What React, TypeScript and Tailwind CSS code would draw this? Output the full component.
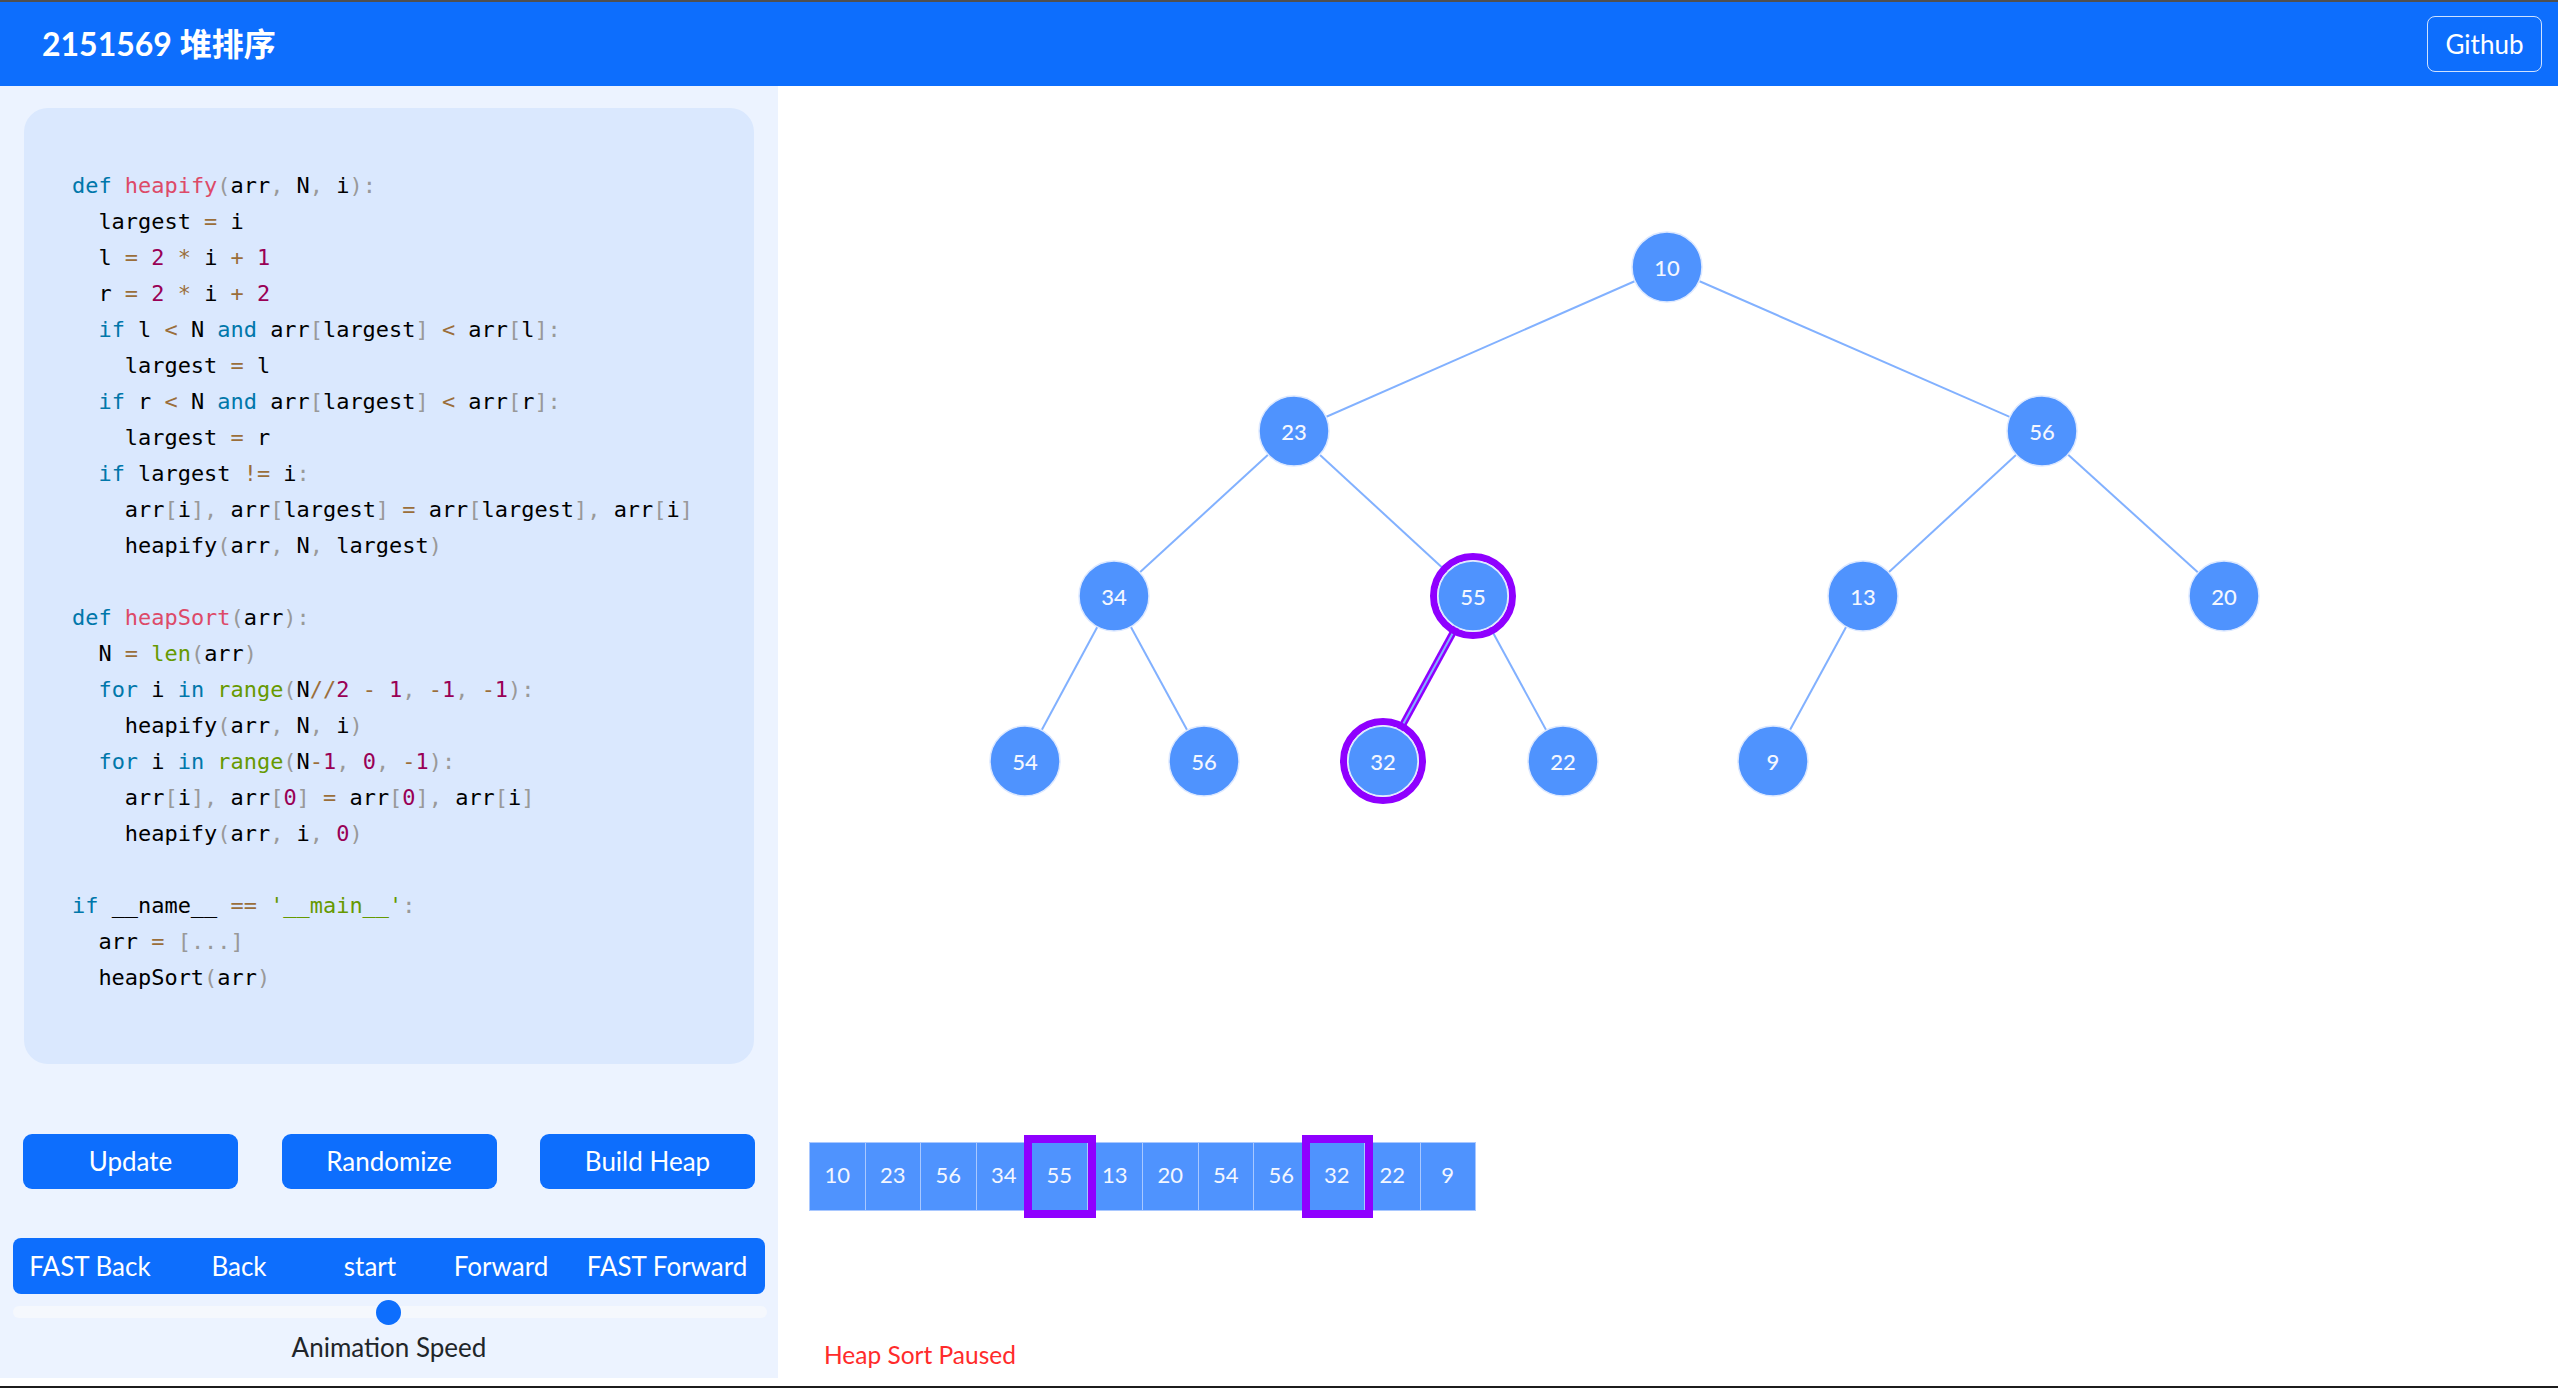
import React from "react";

type Tok = [string, string];

const C: Record<string, string> = {
  k: "text-[#0077aa]",
  f: "text-[#dd4a68]",
  p: "text-[#999999]",
  o: "text-[#9a6e3a]",
  n: "text-[#990055]",
  b: "text-[#669900]",
  s: "text-[#669900]",
  t: "text-black",
};

const t = (s: string): Tok => ["t", s];
const k = (s: string): Tok => ["k", s];
const f = (s: string): Tok => ["f", s];
const p = (s: string): Tok => ["p", s];
const o = (s: string): Tok => ["o", s];
const n = (s: string): Tok => ["n", s];
const b = (s: string): Tok => ["b", s];
const s_ = (s: string): Tok => ["s", s];

const lines: Tok[][] = [
  [k("def"), t(" "), f("heapify"), p("("), t("arr"), p(","), t(" N"), p(","), t(" i"), p(")"), p(":")],
  [t("  largest "), o("="), t(" i")],
  [t("  l "), o("="), t(" "), n("2"), t(" "), o("*"), t(" i "), o("+"), t(" "), n("1")],
  [t("  r "), o("="), t(" "), n("2"), t(" "), o("*"), t(" i "), o("+"), t(" "), n("2")],
  [t("  "), k("if"), t(" l "), o("<"), t(" N "), k("and"), t(" arr"), p("["), t("largest"), p("]"), t(" "), o("<"), t(" arr"), p("["), t("l"), p("]"), p(":")],
  [t("    largest "), o("="), t(" l")],
  [t("  "), k("if"), t(" r "), o("<"), t(" N "), k("and"), t(" arr"), p("["), t("largest"), p("]"), t(" "), o("<"), t(" arr"), p("["), t("r"), p("]"), p(":")],
  [t("    largest "), o("="), t(" r")],
  [t("  "), k("if"), t(" largest "), o("!="), t(" i"), p(":")],
  [t("    arr"), p("["), t("i"), p("]"), p(","), t(" arr"), p("["), t("largest"), p("]"), t(" "), o("="), t(" arr"), p("["), t("largest"), p("]"), p(","), t(" arr"), p("["), t("i"), p("]")],
  [t("    heapify"), p("("), t("arr"), p(","), t(" N"), p(","), t(" largest"), p(")")],
  [t(" ")],
  [k("def"), t(" "), f("heapSort"), p("("), t("arr"), p(")"), p(":")],
  [t("  N "), o("="), t(" "), b("len"), p("("), t("arr"), p(")")],
  [t("  "), k("for"), t(" i "), k("in"), t(" "), b("range"), p("("), t("N"), o("//"), n("2"), t(" "), o("-"), t(" "), n("1"), p(","), t(" "), o("-"), n("1"), p(","), t(" "), o("-"), n("1"), p(")"), p(":")],
  [t("    heapify"), p("("), t("arr"), p(","), t(" N"), p(","), t(" i"), p(")")],
  [t("  "), k("for"), t(" i "), k("in"), t(" "), b("range"), p("("), t("N"), o("-"), n("1"), p(","), t(" "), n("0"), p(","), t(" "), o("-"), n("1"), p(")"), p(":")],
  [t("    arr"), p("["), t("i"), p("]"), p(","), t(" arr"), p("["), n("0"), p("]"), t(" "), o("="), t(" arr"), p("["), n("0"), p("]"), p(","), t(" arr"), p("["), t("i"), p("]")],
  [t("    heapify"), p("("), t("arr"), p(","), t(" i"), p(","), t(" "), n("0"), p(")")],
  [t(" ")],
  [k("if"), t(" __name__ "), o("=="), t(" "), s_("'__main__'"), p(":")],
  [t("  arr "), o("="), t(" "), p("[...]")],
  [t("  heapSort"), p("("), t("arr"), p(")")],
];

type Node = { id: string; v: number; x: number; y: number; hl?: boolean };
const nodes: Node[] = [
  { id: "a", v: 10, x: 889, y: 181 },
  { id: "b", v: 23, x: 516, y: 345 },
  { id: "c", v: 56, x: 1264, y: 345 },
  { id: "d", v: 34, x: 336, y: 510 },
  { id: "e", v: 55, x: 695, y: 510, hl: true },
  { id: "f", v: 13, x: 1085, y: 510 },
  { id: "g", v: 20, x: 1446, y: 510 },
  { id: "h", v: 54, x: 247, y: 675 },
  { id: "i", v: 56, x: 426, y: 675 },
  { id: "j", v: 32, x: 605, y: 675, hl: true },
  { id: "k", v: 22, x: 785, y: 675 },
  { id: "l", v: 9, x: 995, y: 675 },
];
const edges: [string, string, boolean?][] = [
  ["a", "b"], ["a", "c"], ["b", "d"], ["b", "e"], ["c", "f"], ["c", "g"],
  ["d", "h"], ["d", "i"], ["e", "j", true], ["e", "k"], ["f", "l"],
];
const byId = (id: string) => nodes.find((x) => x.id === id)!;

const arr = [10, 23, 56, 34, 55, 13, 20, 54, 56, 32, 22, 9];
const hlIdx = [4, 9];

const sans = { fontFamily: "Lato, 'Noto Sans', 'Noto Sans CJK SC', sans-serif" };

export default function App() {
  return (
    <div className="w-[2558px] h-[1388px] flex flex-col bg-white overflow-hidden" style={sans}>
      <div className="h-[2px] bg-[#4f4f4f] shrink-0" />
      <header className="h-[84px] shrink-0 bg-[#0d6efd] flex items-center justify-between pl-[42px] pr-[16px]">
        <div className="text-white text-[32px] font-bold leading-none" style={{ fontFamily: "Lato, 'Noto Sans CJK SC', sans-serif" }}>
          2151569 堆排序
        </div>
        <button className="w-[115px] h-[56px] rounded-[8px] border border-white/80 text-white text-[26px] flex items-center justify-center">
          Github
        </button>
      </header>
      <div className="flex-1 flex min-h-0">
        <aside className="w-[778px] h-[1292px] shrink-0 bg-[#ecf3ff] pt-[22px] flex flex-col">
          <div className="mx-[24px] h-[956px] rounded-[24px] bg-[#dae8fe] pt-[60px] pl-[48px]">
            <pre
              className="text-[21.95px] leading-[36px] whitespace-pre m-0"
              style={{ fontFamily: "'DejaVu Sans Mono', 'Liberation Mono', monospace" }}
            >
              {lines.map((ln, i) => (
                <div key={i}>
                  {ln.map((tk, j) => (
                    <span key={j} className={C[tk[0]]}>
                      {tk[1]}
                    </span>
                  ))}
                </div>
              ))}
            </pre>
          </div>
          <div className="mt-[70px] px-[23px] flex justify-between">
            {["Update", "Randomize", "Build Heap"].map((l) => (
              <button
                key={l}
                className="w-[215px] h-[55px] rounded-[9px] bg-[#0d6efd] text-white text-[26px] flex items-center justify-center"
              >
                {l}
              </button>
            ))}
          </div>
          <div className="mt-[49px] ml-[13px] w-[752px] h-[56px] rounded-[8px] bg-[#0d6efd] flex items-center text-white text-[26px]">
            <span className="w-[154px] text-center">FAST Back</span>
            <span className="w-[144px] text-center">Back</span>
            <span className="w-[118px] text-center">start</span>
            <span className="w-[144px] text-center">Forward</span>
            <span className="flex-1 text-center pr-[4px]">FAST Forward</span>
          </div>
          <div className="mt-[12px] ml-[13px] w-[754px] h-[12px] rounded-full bg-[#f5f8fd] relative">
            <div className="absolute left-[363px] top-[-6.5px] w-[25px] h-[25px] rounded-full bg-[#0d6efd]" />
          </div>
          <div className="mt-[10px] text-center text-[26px] text-[#212529] leading-[39px]">Animation Speed</div>
        </aside>
        <main className="flex-1 flex flex-col">
          <svg width="1780" height="1056" viewBox="0 0 1780 1056" className="block shrink-0">
            {edges.map(([a, c, hl], i) => {
              const A = byId(a);
              const B = byId(c);
              return (
                <g key={i}>
                  {hl && <line x1={A.x} y1={A.y} x2={B.x} y2={B.y} stroke="#8f00ff" strokeWidth={7} />}
                  <line x1={A.x} y1={A.y} x2={B.x} y2={B.y} stroke="#82b1ff" strokeWidth={2} />
                </g>
              );
            })}
            {nodes.map((nd) => (
              <g key={nd.id}>
                {nd.hl && <circle cx={nd.x} cy={nd.y} r={39.5} fill="none" stroke="#8f00ff" strokeWidth={7} />}
                <circle cx={nd.x} cy={nd.y} r={35} fill="#4f93fe" stroke="#dce8ff" strokeWidth={1.5} />
                <text
                  x={nd.x}
                  y={nd.y}
                  textAnchor="middle"
                  dominantBaseline="central"
                  fill="#f4f7ff"
                  fontSize={22}
                  fontWeight={500}
                  style={{ fontFamily: "Lato, 'Noto Sans', sans-serif" }}
                >
                  {nd.v}
                </text>
              </g>
            ))}
          </svg>
          <div className="ml-[31px] flex border-y border-l border-[#a9c8ff] w-max">
            {arr.map((v, i) => (
              <div
                key={i}
                className={
                  "w-[55.5px] h-[67px] pb-[4px] bg-[#4f93fe] border-r border-[#a9c8ff] flex items-center justify-center text-[22px] text-[#f4f7ff] " +
                  (hlIdx.includes(i) ? "relative z-10 outline-8 outline-[#8f00ff]" : "")
                }
              >
                {v}
              </div>
            ))}
          </div>
          <div className="mt-[126px] ml-[46px] text-[24.5px] leading-[36px] text-[#ff2b2b]">Heap Sort Paused</div>
        </main>
      </div>
      <div className="h-[2px] bg-[#1c1c1c] shrink-0" />
    </div>
  );
}
